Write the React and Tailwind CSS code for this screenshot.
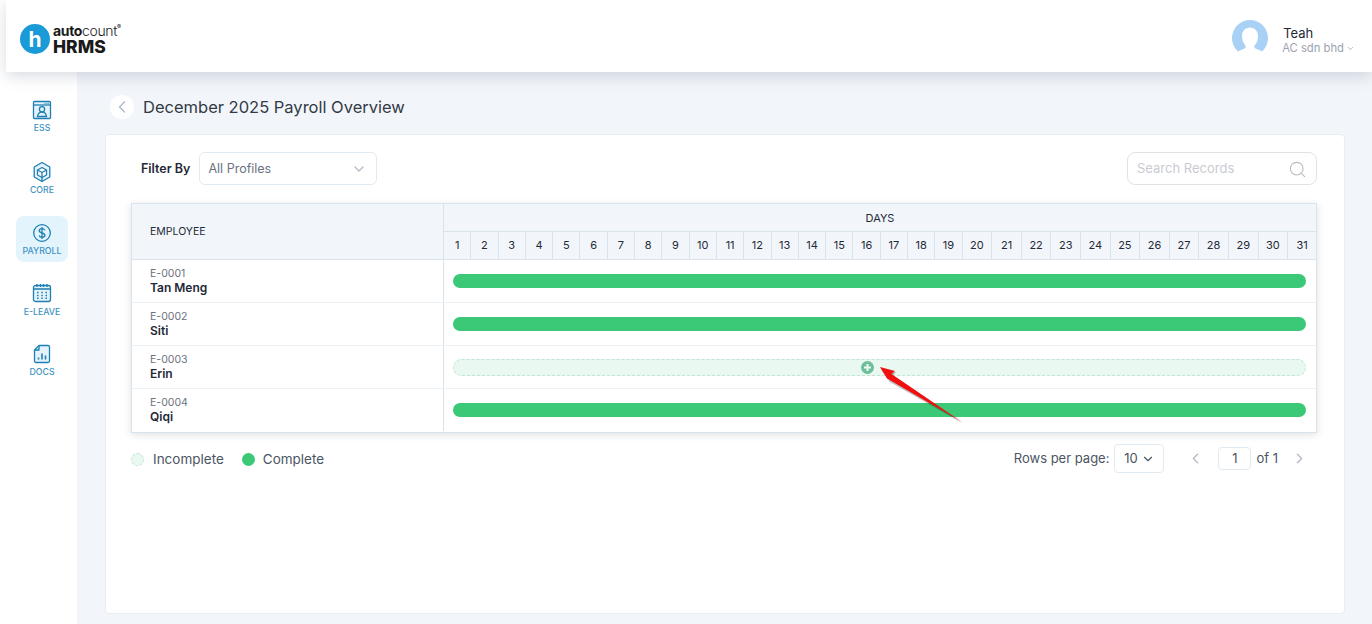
import { ChevronDown, ChevronLeft, ChevronRight, Search } from 'lucide-react';

const DAYS = Array.from({ length: 31 }, (_, i) => i + 1);

const EMPLOYEES = [
  { id: 'E-0001', name: 'Tan Meng', complete: true },
  { id: 'E-0002', name: 'Siti', complete: true },
  { id: 'E-0003', name: 'Erin', complete: false },
  { id: 'E-0004', name: 'Qiqi', complete: true },
];

const EssIcon = () => (
  <svg width="20" height="20" viewBox="0 0 20 20" fill="none" stroke="#1f7fb2" strokeWidth="1.3">
    <rect x="1.5" y="1.5" width="17" height="17" rx="1" fill="#e4f3fb" />
    <path d="M1.5 5h17" />
    <path d="M12.5 3.3h1M14.5 3.3h1M16.3 3.3h.8" strokeWidth="1" />
    <circle cx="10" cy="9.3" r="2.6" />
    <path d="M5.5 16.5c.3-3 2-4.4 4.5-4.4s4.200 1.400 4.500 4.400z" />
  </svg>
);

const CoreIcon = () => (
  <svg width="20" height="22" viewBox="0 0 20 22" fill="none" stroke="#1f7fb2" strokeWidth="1.3" strokeLinejoin="round">
    <path d="M10 1.500l7.800 4.500v10L10 20.500 2.200 16V6z" fill="#e4f3fb" />
    <path d="M10 6.500l4.500 2.500v5L10 16.500 5.500 14V9z" fill="#fff" />
    <path d="M5.500 9l4.500 2.500L14.500 9M10 11.500v5M10 16.500v4" />
  </svg>
);

const PayrollIcon = () => (
  <svg width="20" height="20" viewBox="0 0 20 20" fill="none" stroke="#1f7fb2" strokeWidth="1.3">
    <circle cx="10" cy="10" r="8.300" />
    <path d="M12.800 7.400c-.4-1.100-1.500-1.700-2.800-1.700-1.600 0-2.800.9-2.800 2.100 0 2.900 5.700 1.500 5.700 4.400 0 1.200-1.300 2.100-2.900 2.100-1.400 0-2.500-.7-2.900-1.800M10 4v12" />
  </svg>
);

const LeaveIcon = () => (
  <svg width="20" height="20" viewBox="0 0 20 20" fill="none" stroke="#1f7fb2" strokeWidth="1.3">
    <rect x="1.500" y="2.500" width="17" height="16" rx="2" fill="#e4f3fb" />
    <path d="M1.500 6h17M5 1v3M8.500 1v3M11.500 1v3M15 1v3" />
    <path d="M5 9.500h1.500M9.300 9.500h1.500M13.500 9.500H15M5 12.500h1.500M9.300 12.500h1.500M13.500 12.500H15M5 15.300h1.500M9.300 15.300h1.500M13.500 15.300H15" strokeWidth="1.400" />
  </svg>
);

const DocsIcon = () => (
  <svg width="18" height="20" viewBox="0 0 18 20" fill="none" stroke="#1f7fb2" strokeWidth="1.3" strokeLinejoin="round">
    <path d="M6 1.500h9a1.500 1.500 0 0 1 1.500 1.500v14a1.500 1.500 0 0 1-1.500 1.500H3A1.500 1.500 0 0 1 1.500 17V6z" fill="#e4f3fb" />
    <path d="M6 1.500V6H1.500" />
    <path d="M5.500 15.500v-2M9 15.500V9.500M12.500 15.500v-4" strokeWidth="1.600" />
  </svg>
);

const NAV = [
  { label: 'ESS', Icon: EssIcon, box: 'pt-[7px]', gap: 'mt-[2.5px]' },
  { label: 'CORE', Icon: CoreIcon, box: 'pt-[7px] mt-[15px]', gap: 'mt-[1.5px]' },
  { label: 'PAYROLL', Icon: PayrollIcon, box: 'pt-[7px] mt-[16px] bg-[#e3f4fd]', gap: 'mt-[2.5px]' },
  { label: 'E-LEAVE', Icon: LeaveIcon, box: 'pt-[6px] mt-[15px]', gap: 'mt-[3.5px]' },
  { label: 'DOCS', Icon: DocsIcon, box: 'pt-[6px] mt-[15px]', gap: 'mt-[2.5px]' },
];

const Logo = () => (
  <div className="flex items-center gap-[3px] pt-[6px]">
    <div className="flex h-[30px] w-[30px] items-center justify-center rounded-full bg-[#1b9ad8]">
      <span className="text-[21px] leading-none font-bold text-white">h</span>
    </div>
    <div className="flex flex-col">
      <div className="flex items-start text-[14px] leading-[15px] tracking-tight text-[#1a1a1a]">
        <span className="font-bold">auto</span>
        <span className="font-light">count</span>
        <span className="text-[6px] leading-[8px]">®</span>
      </div>
      <span className="text-[17.500px] leading-[18px] font-extrabold text-[#1a1a1a]">HRMS</span>
    </div>
  </div>
);

const Avatar = () => (
  <svg width="36" height="36" viewBox="0 0 36 36">
    <path d="M6 31.500a18 18 0 1 1 24 0c-2-1.500-5-2.300-7-3.300-1-.6-1-2 0-3.200 2-2.500 3-5.500 3-9 0-5-3.500-8.500-8-8.500s-8 3.500-8 8.500c0 3.500 1 6.500 3 9 1 1.200 1 2.600 0 3.200-2 1-5 1.800-7 3.300z" fill="#a9d1f5" />
  </svg>
);

const Sidebar = () => (
  <aside className="w-[77px] shrink-0 bg-white pt-[21px] pl-[16px]">
    {NAV.map(({ label, Icon, box, gap }) => (
      <div key={label} className={`flex h-[46px] w-[52px] flex-col items-center rounded-lg ${box}`}>
        <Icon />
        <span className={`text-[8.750px] leading-[11px] font-medium text-[#3d93c2] ${gap}`}>{label}</span>
      </div>
    ))}
  </aside>
);

const DayBar = ({ complete }) =>
  complete ? (
    <div className="h-[14px] w-full rounded-full bg-[#3bc977]" />
  ) : (
    <div className="flex h-[17px] w-full items-center rounded-full border border-dashed border-[#c0e6d2] bg-[#e9f8f0] pl-[407px]">
      <span className="flex h-[13px] w-[13px] items-center justify-center rounded-full bg-[#6dbf9c]">
        <svg width="9" height="9" viewBox="0 0 9 9" stroke="#eef9f3" strokeWidth="2">
          <path d="M4.500 1v7M1 4.500h7" />
        </svg>
      </span>
    </div>
  );

const PayrollTable = () => (
  <div className="border border-[#d8e3ec] shadow-[0_2px_8px_rgba(0,0,0,0.12)]">
    <div className="flex h-[56px] border-b border-[#d8e3ec] bg-[#f2f6fa]">
      <div className="flex w-[312px] shrink-0 items-center border-r border-[#d8e3ec] pl-[18px] text-[10.500px] text-[#1f2937]">
        EMPLOYEE
      </div>
      <div className="flex min-w-0 flex-1 flex-col">
        <div className="flex h-[28px] items-center justify-center border-b border-[#d8e3ec] pt-[1px] text-[11px] text-[#1f2937]">
          DAYS
        </div>
        <div className="grid flex-1 grid-cols-[repeat(19,minmax(0,27.4fr))_repeat(11,minmax(0,29.7fr))_minmax(0,28fr)]">
          {DAYS.map((d) => (
            <div
              key={d}
              className="flex items-center justify-center border-r border-[#d8e3ec] text-[11px] text-[#1f2937] last:border-r-0"
            >
              {d}
            </div>
          ))}
        </div>
      </div>
    </div>
    {EMPLOYEES.map((e) => (
      <div key={e.id} className="flex h-[43px] border-b border-[#edf1f5] last:border-b-transparent">
        <div className="flex w-[312px] shrink-0 flex-col justify-center border-r border-[#d8e3ec] pb-[2px] pl-[18px]">
          <span className="text-[10.500px] leading-[15px] text-[#6b7280]">{e.id}</span>
          <span className="text-[12px] leading-[14px] font-semibold text-[#1f2937]">{e.name}</span>
        </div>
        <div className="flex min-w-0 flex-1 items-center px-[9px] pr-[10px]">
          <DayBar complete={e.complete} />
        </div>
      </div>
    ))}
  </div>
);

const Footer = () => (
  <div className="mt-[11px] flex h-[29px] items-center justify-between">
    <div className="flex items-center pt-[1px] text-[13.500px] text-[#4b5563]">
      <span className="h-[13px] w-[13px] rounded-full border border-dashed border-[#c0e6d2] bg-[#e9f8f0]" />
      <span className="ml-[9px]">Incomplete</span>
      <span className="ml-[18px] h-[13px] w-[13px] rounded-full bg-[#3bc977]" />
      <span className="ml-[8px]">Complete</span>
    </div>
    <div className="flex items-center text-[13px] text-[#4b5563]">
      <span>Rows per page:</span>
      <div className="ml-[5px] flex h-[29px] w-[50px] items-center justify-center gap-[3px] rounded border border-[#e2eaf1]">
        10 <ChevronDown size={14} />
      </div>
      <ChevronLeft size={17} className="ml-[23px] text-[#b5bcc5]" />
      <div className="ml-[14px] flex h-[23px] w-[33px] items-center justify-center rounded border border-[#e2eaf1]">1</div>
      <span className="ml-[5px]">of 1</span>
      <ChevronRight size={17} className="mr-[9px] ml-[13px] text-[#b5bcc5]" />
    </div>
  </div>
);

export default function App() {
  return (
    <div className="flex h-[624px] flex-col overflow-hidden bg-white font-['Inter',sans-serif]">
      <header className="relative z-10 ml-[6px] flex h-[72px] shrink-0 items-center justify-between bg-white pr-[17px] pl-[14px] shadow-[0_4px_14px_rgba(100,116,139,0.26)]">
        <Logo />
        <div className="flex items-center gap-[14px] pt-[4px]">
          <Avatar />
          <div className="mt-[4px] flex flex-col">
            <span className="pl-[1px] text-[13px] leading-[16px] text-[#1f2937]">Teah</span>
            <span className="flex items-center text-[11.250px] leading-[14px] text-[#9ca3af]">
              AC sdn bhd <ChevronDown size={9} className="ml-[2px]" />
            </span>
          </div>
        </div>
      </header>
      <div className="flex min-h-0 flex-1">
        <Sidebar />
        <main className="flex min-w-0 flex-1 flex-col bg-[#f2f6fa] pr-[27px] pb-[10px] pl-[28px]">
          <div className="flex h-[62px] shrink-0 items-center pt-[8px]">
            <button className="ml-[5px] flex h-[24px] w-[24px] items-center justify-center rounded-full bg-white text-[#a9b8cc]">
              <ChevronLeft size={20} strokeWidth={1.5} />
            </button>
            <h1 className="ml-[9px] text-[16.500px] font-normal text-[#333a45]">December 2025 Payroll Overview</h1>
          </div>
          <section className="flex-1 rounded border border-[#e8edf2] bg-white pt-[17px] pr-[27px] pl-[25px]">
            <div className="mb-[18px] flex h-[33px] items-center justify-between">
              <div className="flex items-center">
                <span className="ml-[10px] pt-[1px] text-[12.500px] font-semibold text-[#1f2937]">Filter By</span>
                <div className="ml-[9px] flex h-[33px] w-[178px] items-center justify-between rounded-md border border-[#e2eaf1] pt-[1px] pr-[9px] pl-[8px] text-[12.500px] text-[#6b7280]">
                  All Profiles
                  <ChevronDown size={16} className="text-[#b5bcc5]" />
                </div>
              </div>
              <div className="flex h-[33px] w-[190px] items-center justify-between rounded-lg border border-[#dfe3e8] pt-[1px] pr-[9px] pl-[9px] text-[13px] text-[#c8ccd2]">
                Search Records
                <Search size={19} strokeWidth={1.4} className="text-[#b8bcc2]" />
              </div>
            </div>
            <PayrollTable />
            <Footer />
          </section>
        </main>
      </div>
      <svg className="pointer-events-none absolute top-[360px] left-[875px]" width="95" height="70" viewBox="0 0 95 70">
        <path d="M5 8 L20 11 L17 14 L87 62 L13 20 L13 19 Z" fill="#000" opacity="0.25" transform="translate(1 1.500)" />
        <path d="M5 7 L20 11 L16.500 14 L87 62 L12 18.500 Z" fill="#f01010" />
      </svg>
    </div>
  );
}
